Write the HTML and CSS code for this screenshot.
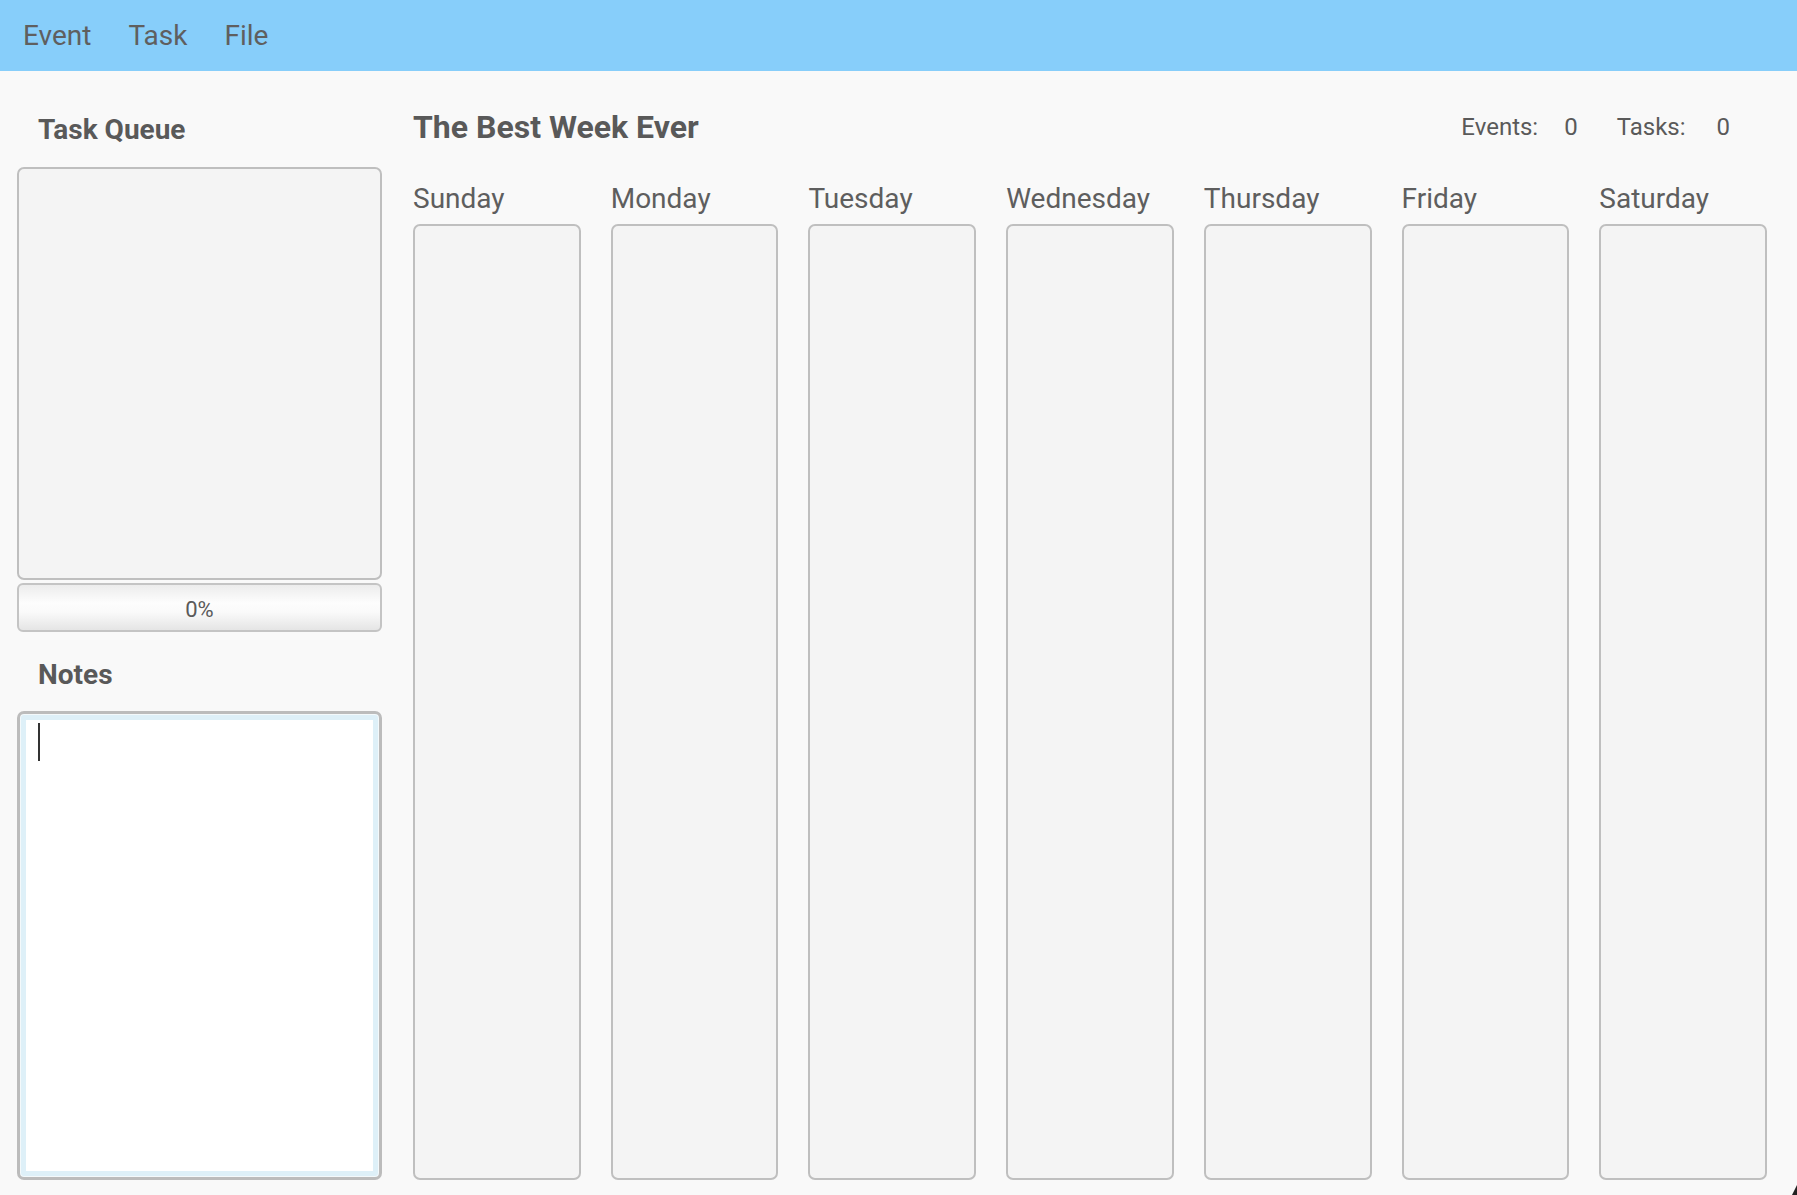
FILE: index.html
```html
<!DOCTYPE html>
<html lang="en">
<head>
<meta charset="utf-8">
<title>The Best Week Ever</title>
<link rel="stylesheet" href="styles.css">
</head>
<body>
<header class="menubar">
  <span class="menu-item">Event</span>
  <span class="menu-item">Task</span>
  <span class="menu-item">File</span>
</header>
<div class="content">
  <aside class="sidebar">
    <h2 class="side-heading">Task Queue</h2>
    <div class="queue-box"></div>
    <div class="progress">0%</div>
    <h2 class="side-heading notes-heading">Notes</h2>
    <div class="notes"><span class="caret"></span></div>
  </aside>
  <main class="main">
    <div class="title-row">
      <h1 class="title">The Best Week Ever</h1>
      <div class="stats">
        <span class="stat-label">Events:</span><span class="stat-value">0</span>
        <span class="stat-label stat-label-wide">Tasks:</span><span class="stat-value">0</span>
      </div>
    </div>
    <div class="week">
      <div class="day"><div class="day-name">Sunday</div><div class="day-box"></div></div>
      <div class="day"><div class="day-name">Monday</div><div class="day-box"></div></div>
      <div class="day"><div class="day-name">Tuesday</div><div class="day-box"></div></div>
      <div class="day"><div class="day-name">Wednesday</div><div class="day-box"></div></div>
      <div class="day"><div class="day-name">Thursday</div><div class="day-box"></div></div>
      <div class="day"><div class="day-name">Friday</div><div class="day-box"></div></div>
      <div class="day"><div class="day-name">Saturday</div><div class="day-box"></div></div>
    </div>
  </main>
</div>
<div class="grip"></div>
</body>
</html>
```

FILE: styles.css
```css
* { box-sizing: border-box; }
html, body { margin: 0; padding: 0; }
body {
  height: 1195px;
  background: #f9f9f9;
  font-family: Roboto, "Liberation Sans", sans-serif;
  color: #5e5e5e;
  display: flex;
  flex-direction: column;
  overflow: hidden;
}
.menubar {
  height: 71px;
  flex: 0 0 71px;
  background: #87cefa;
  display: flex;
  align-items: center;
  gap: 37px;
  padding-left: 23px;
  padding-top: 1px;
}
.menu-item {
  font-size: 28px;
  line-height: 34px;
  color: #5f5f5f;
}
.content {
  flex: 1;
  display: flex;
  gap: 31px;
  padding: 0 30px 15px 17px;
  min-height: 0;
}
.sidebar {
  width: 365px;
  flex: 0 0 365px;
  display: flex;
  flex-direction: column;
  padding-top: 42px;
}
.side-heading {
  margin: 0;
  padding-left: 21px;
  font-size: 28px;
  line-height: 34px;
  font-weight: 700;
  color: #595959;
}
.queue-box {
  margin-top: 20px;
  height: 413px;
  background: #f4f4f4;
  border: 2px solid #bfbfbf;
  border-radius: 7px;
}
.progress {
  margin-top: 3px;
  height: 49px;
  border: 2px solid #c4c4c4;
  border-radius: 6px;
  background: linear-gradient(#ececec, #fdfdfd 40%, #fafafa 60%, #e5e5e5);
  display: flex;
  align-items: center;
  justify-content: center;
  font-size: 22px;
  color: #5a5a5a;
  padding-top: 3px;
}
.notes-heading {
  margin-top: 26px;
}
.notes {
  margin-top: 19px;
  flex: 1;
  background: #fff;
  border: 3px solid #bcbcbc;
  border-radius: 7px;
  box-shadow: inset 0 0 0 1px #f4f9fb, inset 0 0 0 6px #def0f8;
  padding: 9px 0 0 18px;
}
.caret {
  display: block;
  width: 2px;
  height: 38px;
  background: #333;
}
.main {
  flex: 1;
  display: flex;
  flex-direction: column;
  padding-top: 36px;
  min-width: 0;
}
.title-row {
  display: flex;
  justify-content: space-between;
  align-items: flex-start;
  padding-right: 37px;
}
.title {
  margin: 0;
  font-size: 32px;
  line-height: 40px;
  font-weight: 700;
  color: #595959;
}
.stats {
  font-size: 24px;
  line-height: 40px;
  color: #5a5a5a;
  display: flex;
}
.stat-label { margin-right: 26px; }
.stat-label-wide { margin-right: 31px; }
.stat-value { margin-right: 39px; }
.stat-value:last-child { margin-right: 0; }
.week {
  flex: 1;
  margin-top: 35px;
  display: grid;
  grid-template-columns: repeat(7, 1fr);
  gap: 30px;
  min-height: 0;
}
.day {
  display: flex;
  flex-direction: column;
}
.day-name {
  font-size: 28px;
  line-height: 34px;
  color: #5e5e5e;
  margin-bottom: 8px;
}
.day-box {
  flex: 1;
  background: #f4f4f4;
  border: 2px solid #bfbfbf;
  border-radius: 7px;
}
.grip {
  position: fixed;
  right: 0;
  bottom: 0;
  width: 0;
  height: 0;
  border-left: 5px solid transparent;
  border-bottom: 10px solid #222;
}
```
